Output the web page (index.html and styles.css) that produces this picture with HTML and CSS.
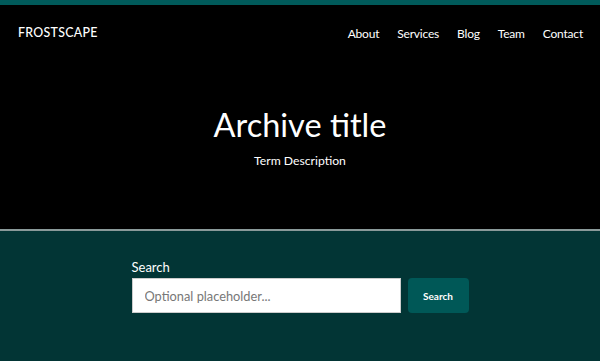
FILE: index.html
```html
<!DOCTYPE html>
<html lang="en">
<head>
<meta charset="utf-8">
<title>Archive title</title>
<link rel="stylesheet" href="styles.css">
</head>
<body>
<div class="topbar"></div>
<header class="hero">
  <nav class="nav">
    <a class="brand" href="#">FROSTSCAPE</a>
    <ul class="menu">
      <li><a href="#">About</a></li>
      <li><a href="#">Services</a></li>
      <li><a href="#">Blog</a></li>
      <li><a href="#">Team</a></li>
      <li><a href="#">Contact</a></li>
    </ul>
  </nav>
  <div class="hero-text">
    <h1 class="title">Archive title</h1>
    <p class="desc">Term Description</p>
  </div>
</header>
<main class="content">
  <form class="search">
    <label class="search-label" for="q">Search</label>
    <div class="search-row">
      <input class="search-input" id="q" type="text" placeholder="Optional placeholder...">
      <button class="search-btn" type="button">Search</button>
    </div>
  </form>
</main>
</body>
</html>
```

FILE: styles.css
```css
* { box-sizing: border-box; }
html, body { margin: 0; padding: 0; }
body {
  font-family: "Lato", "Open Sans", sans-serif;
  background: #023535;
  color: #fff;
  height: 361px;
  overflow: hidden;
}
.topbar {
  height: 5px;
  background: #005a5a;
}
.hero {
  background: #000;
  height: 226px;
  border-bottom: 2px solid #8a9a9a;
  display: flex;
  flex-direction: column;
}
.nav {
  display: flex;
  justify-content: space-between;
  align-items: center;
  padding: 16px 17px 0 18px;
  height: 36px;
}
.brand {
  color: #fff;
  text-decoration: none;
  font-size: 12.4px;
  font-weight: 500;
  letter-spacing: 0.3px;
  padding-top: 2px;
}
.menu {
  list-style: none;
  margin: 0;
  padding: 0;
  display: flex;
  gap: 18px;
}
.menu a {
  color: #fff;
  text-decoration: none;
  font-size: 12px;
  letter-spacing: -0.2px;
}
.hero-text {
  text-align: center;
  padding-top: 64px;
}
.title {
  margin: 0;
  font-size: 32.5px;
  font-weight: 400;
  line-height: 40px;
}
.desc {
  margin: 7px 0 0;
  font-size: 12.2px;
  line-height: 18px;
}
.content {
  display: flex;
  justify-content: center;
  padding-top: 27px;
}
.search {
  width: 337px;
  display: flex;
  flex-direction: column;
  gap: 2px;
}
.search-label {
  font-size: 13px;
  line-height: 18px;
}
.search-row {
  display: flex;
  gap: 7px;
}
.search-input {
  width: 269px;
  height: 35px;
  border: 1px solid #ccc;
  background: #fff;
  padding: 0 12px;
  font-family: inherit;
  font-size: 12.8px;
  color: #333;
}
.search-input::placeholder { color: #777; }
.search-btn {
  width: 61px;
  height: 35px;
  border: 0;
  border-radius: 4px;
  background: #005857;
  color: #fff;
  font-family: inherit;
  font-size: 10px;
  font-weight: 700;
}
```
